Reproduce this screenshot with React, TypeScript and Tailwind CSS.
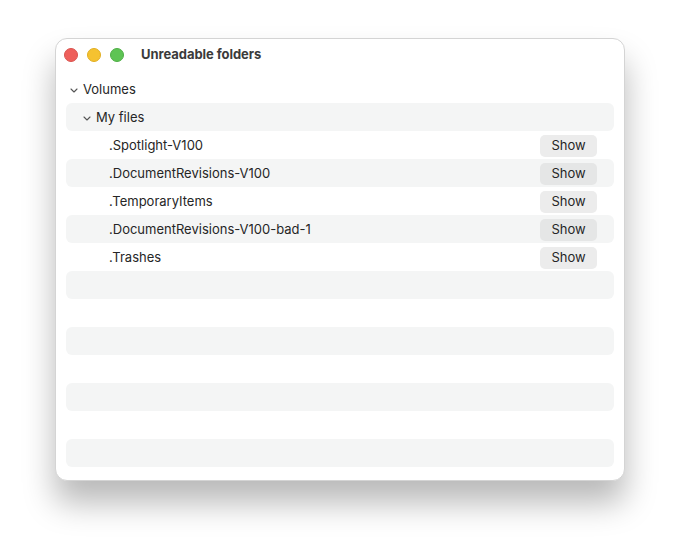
import React from "react";

const Chevron = () => (
  <svg width="8" height="5" viewBox="0 0 8 5" className="shrink-0">
    <path d="M1 1 L4 4 L7 1" fill="none" stroke="#555" strokeWidth="1.1" strokeLinecap="round" strokeLinejoin="round" />
  </svg>
);

const items = [
  ".Spotlight-V100",
  ".DocumentRevisions-V100",
  ".TemporaryItems",
  ".DocumentRevisions-V100-bad-1",
  ".Trashes",
];

export default function App() {
  return (
    <div className="w-[680px] h-[555px] bg-white pt-[38px] pl-[55px]" style={{ fontFamily: "Inter, 'Noto Sans', sans-serif" }}>
      <div className="w-[570px] h-[443px] bg-white rounded-[12px] border border-[#d4d4d4] shadow-[0_22px_32px_rgba(0,0,0,0.28)] flex flex-col overflow-hidden">
        <div className="h-[31px] flex items-center pl-[8px] shrink-0">
          <div className="flex gap-[9px]">
            <div className="w-[14px] h-[14px] rounded-full bg-[#ee5f5b] border border-[#d9534f]" />
            <div className="w-[14px] h-[14px] rounded-full bg-[#f5c230] border border-[#e0ae22]" />
            <div className="w-[14px] h-[14px] rounded-full bg-[#5ec454] border border-[#4fae46]" />
          </div>
          <div className="ml-[17px] text-[13px] font-bold text-[#3b3b3b] tracking-[-0.05px]">Unreadable folders</div>
        </div>
        <div className="mt-[5px] px-[10px] flex flex-col text-[13px] text-[#262626]">
          <div className="h-[28px] flex items-center pt-[2px] pl-[4px] gap-[5px]">
            <Chevron />
            <span>Volumes</span>
          </div>
          <div className="h-[28px] flex items-center pt-[2px] pl-[17px] gap-[5px] bg-[#f4f5f5] rounded-[6px]">
            <Chevron />
            <span>My files</span>
          </div>
          {items.map((name, i) => (
            <div
              key={name}
              className={`h-[28px] flex items-center pt-[2px] pl-[43px] pr-[17px] rounded-[6px] ${i % 2 === 1 ? "bg-[#f4f5f5]" : ""}`}
            >
              <span className="flex-1">{name}</span>
              <div className={`w-[57px] h-[22px] rounded-[5px] flex items-center justify-center text-[13px] text-[#262626] ${i % 2 === 1 ? "bg-[#e5e6e6]" : "bg-[#ececec]"}`}>
                Show
              </div>
            </div>
          ))}
          {[0, 1, 2, 3, 4, 5, 6].map((i) => (
            <div key={i} className={`h-[28px] rounded-[6px] ${i % 2 === 0 ? "bg-[#f4f5f5]" : ""}`} />
          ))}
        </div>
      </div>
    </div>
  );
}
